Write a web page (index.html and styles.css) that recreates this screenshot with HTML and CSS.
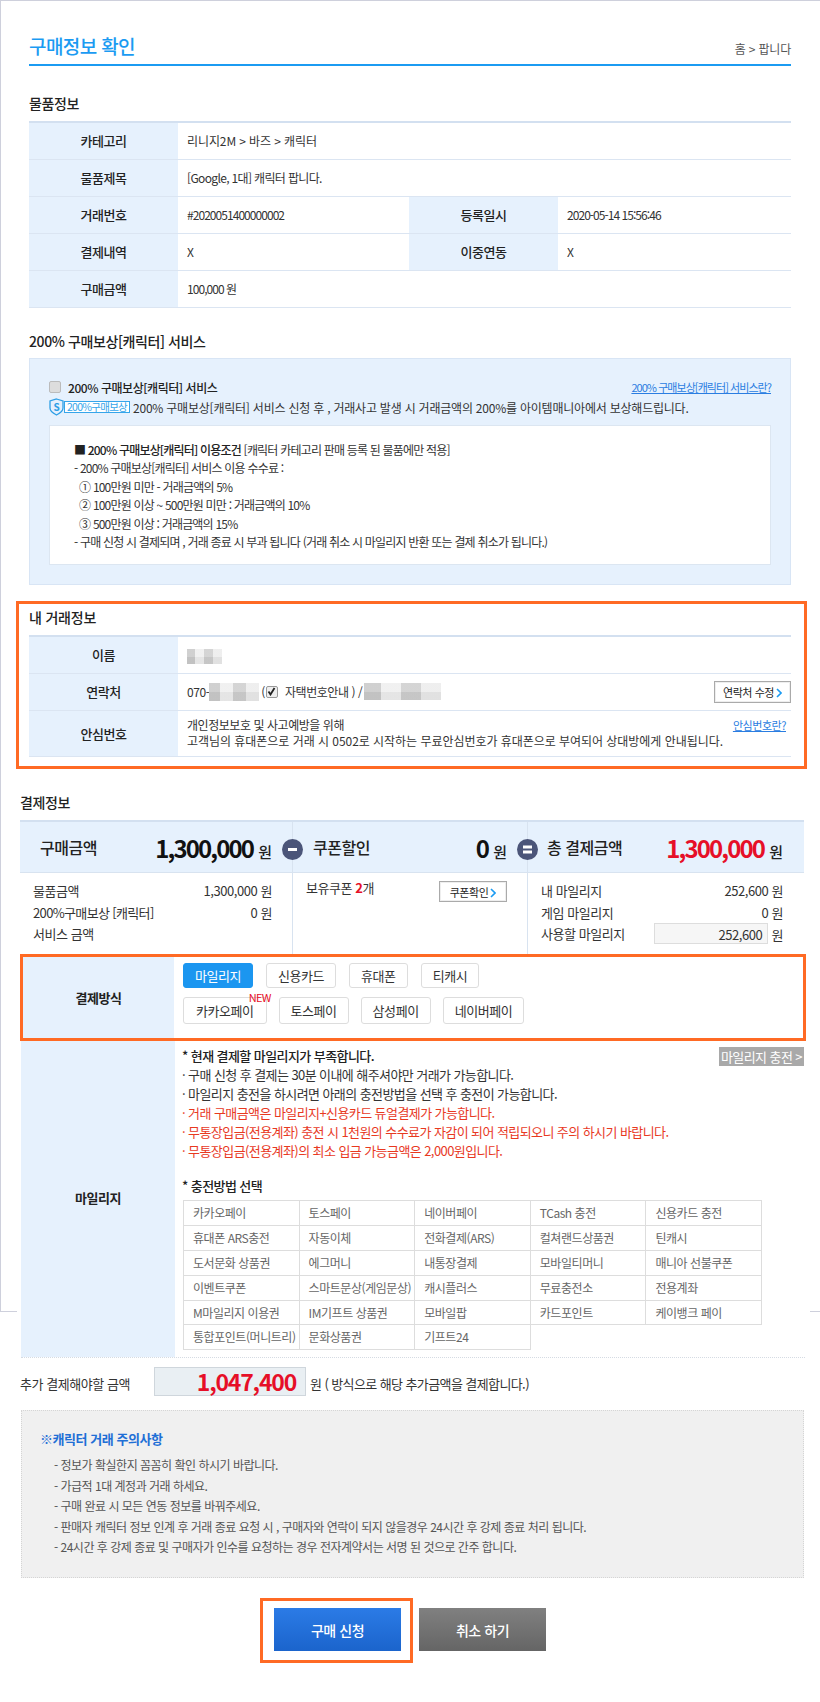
FILE: index.html
```html
<!DOCTYPE html>
<html lang="ko">
<head>
    <meta charset="UTF-8">
    <meta name="viewport" content="width=device-width, initial-scale=1.0">
    <title>구매정보 확인</title>
    <link rel="stylesheet" href="styles.css">
</head>
<body>
<div class="page">

<div class="page-head">
    <h2>구매정보 확인</h2>
    <span class="crumb">홈 &gt; 팝니다</span>
</div>

<div class="section">
    <h3 class="sec-title">물품정보</h3>
    <table class="info">
        <colgroup><col class="c-label"><col class="c-value"><col class="c-label"><col></colgroup>
        <tr><th>카테고리</th><td colspan="3" class="wide-text">리니지2M &gt; 바즈 &gt; 캐릭터</td></tr>
        <tr><th>물품제목</th><td colspan="3" class="tight">[Google, 1대] 캐릭터 팝니다.</td></tr>
        <tr><th>거래번호</th><td class="num">#2020051400000002</td><th>등록일시</th><td class="num">2020-05-14 15:56:46</td></tr>
        <tr><th>결제내역</th><td>X</td><th>이중연동</th><td>X</td></tr>
        <tr><th>구매금액</th><td colspan="3" class="num">100,000 원</td></tr>
    </table>
</div>

<div class="section">
    <h3 class="sec-title sec-2">200% 구매보상[캐릭터] 서비스</h3>
    <div class="reward-box">
        <div class="reward-top">
            <span class="check"></span>
            <b>200% 구매보상[캐릭터] 서비스</b>
            <a class="link push" href="#">200% 구매보상[캐릭터] 서비스란?</a>
        </div>
        <div class="reward-sub">
            <svg class="shield" width="15" height="18" viewBox="0 0 15 18">
                <path d="M7.5 1 L14 3 V10 C14 13.5 10.5 15.5 7.5 17 C4.500 15.500 1 13.500 1 10 V3 Z" fill="#e6f0fd" stroke="#2e9fe6" stroke-width="1.300"/>
                <text x="7.500" y="12.500" text-anchor="middle" class="shield-s">S</text>
            </svg>
            <span class="badge">200%구매보상</span>
            <span class="reward-desc">200% 구매보상[캐릭터] 서비스 신청 후 , 거래사고 발생 시 거래금액의 200%를 아이템매니아에서 보상해드립니다.</span>
        </div>
        <div class="reward-terms">
            <p><b>■ 200% 구매보상[캐릭터] 이용조건</b> [캐릭터 카테고리 판매 등록 된 물품에만 적용]</p>
            <p>- 200% 구매보상[캐릭터] 서비스 이용 수수료 :</p>
            <p>&nbsp;&nbsp;① 100만원 미만 - 거래금액의 5%</p>
            <p>&nbsp;&nbsp;② 100만원 이상 ~ 500만원 미만 : 거래금액의 10%</p>
            <p>&nbsp;&nbsp;③ 500만원 이상 : 거래금액의 15%</p>
            <p>- 구매 신청 시 결제되며 , 거래 종료 시 부과 됩니다 (거래 취소 시 마일리지 반환 또는 결제 취소가 됩니다.)</p>
        </div>
    </div>
</div>

<div class="my-info">
    <h3 class="sec-title">내 거래정보</h3>
    <table class="info">
        <colgroup><col class="c-label"><col></colgroup>
        <tr><th>이름</th><td><span class="blur blur-name"></span></td></tr>
        <tr>
            <th>연락처</th>
            <td>
                <div class="contact">
                    <span>070-</span><span class="blur blur-phone"></span>
                    <span class="paren">(</span><span class="check checked"><svg width="9" height="9" viewBox="0 0 9 9"><path d="M1.500 4.500 L3.500 7.500 L7.500 1" fill="none" stroke="#222" stroke-width="1.800"/></svg></span>
                    <span class="home-no">자택번호안내 ) /</span><span class="blur blur-mobile"></span>
                    <button class="small-btn push">연락처 수정<svg class="chev" width="6" height="10" viewBox="0 0 6 10"><path d="M1 1 L5 5 L1 9" fill="none" stroke="#1b9bf2" stroke-width="1.600"/></svg></button>
                </div>
            </td>
        </tr>
        <tr class="tall">
            <th>안심번호</th>
            <td>
                <div class="safe">
                    <p>개인정보보호 및 사고예방을 위해<br><span class="safe-long">고객님의 휴대폰으로 거래 시 0502로 시작하는 무료안심번호가 휴대폰으로 부여되어 상대방에게 안내됩니다.</span></p>
                    <a class="link" href="#">안심번호란?</a>
                </div>
            </td>
        </tr>
    </table>
</div>

<div class="pay">
    <h3 class="sec-title">결제정보</h3>
    <div class="summary">
        <div class="sum-col">
            <div class="sum-top"><span class="sum-name">구매금액</span><span class="sum-val"><b>1,300,000</b> 원</span></div>
            <div class="sum-rows">
                <div><span>물품금액</span><span>1,300,000 원</span></div>
                <div><span class="tight">200%구매보상 [캐릭터]</span><span>0 원</span></div>
                <div><span>서비스 금액</span></div>
            </div>
            <svg class="op" width="21" height="21" viewBox="0 0 21 21"><circle cx="10.500" cy="10.500" r="10.500" fill="#4b5579"/><rect x="6" y="9" width="9" height="3" fill="#fff"/></svg>
        </div>
        <div class="sum-col">
            <div class="sum-top"><span class="sum-name">쿠폰할인</span><span class="sum-val"><b>0</b> 원</span></div>
            <div class="coupon">
                <span>보유쿠폰 <b>2</b>개</span>
                <button class="small-btn">쿠폰확인<svg class="chev" width="6" height="10" viewBox="0 0 6 10"><path d="M1 1 L5 5 L1 9" fill="none" stroke="#1b9bf2" stroke-width="1.600"/></svg></button>
            </div>
            <svg class="op" width="21" height="21" viewBox="0 0 21 21"><circle cx="10.500" cy="10.500" r="10.500" fill="#4b5579"/><rect x="6" y="6.500" width="9" height="3" fill="#fff"/><rect x="6" y="11.500" width="9" height="3" fill="#fff"/></svg>
        </div>
        <div class="sum-col">
            <div class="sum-top"><span class="sum-name">총 결제금액</span><span class="sum-val total"><b>1,300,000</b> 원</span></div>
            <div class="sum-rows">
                <div><span>내 마일리지</span><span>252,600 원</span></div>
                <div><span>게임 마일리지</span><span>0 원</span></div>
                <div><span>사용할 마일리지</span><span><span class="use-input">252,600</span> 원</span></div>
            </div>
        </div>
    </div>

    <div class="method">
        <div class="side-label">결제방식</div>
        <div class="method-btns">
            <div class="btn-row">
                <button class="m-btn on">마일리지</button>
                <button class="m-btn">신용카드</button>
                <button class="m-btn">휴대폰</button>
                <button class="m-btn">티캐시</button>
            </div>
            <div class="btn-row second">
                <button class="m-btn kakao">카카오페이<span class="new">NEW</span></button>
                <button class="m-btn">토스페이</button>
                <button class="m-btn">삼성페이</button>
                <button class="m-btn">네이버페이</button>
            </div>
        </div>
    </div>

    <div class="mileage">
        <div class="side-label">마일리지</div>
        <div class="mileage-body">
            <a class="charge" href="#">마일리지 충전 &gt;</a>
            <p class="strong">* 현재 결제할 마일리지가 부족합니다.</p>
            <p>· 구매 신청 후 결제는 30분 이내에 해주셔야만 거래가 가능합니다.</p>
            <p>· 마일리지 충전을 하시려면 아래의 충전방법을 선택 후 충전이 가능합니다.</p>
            <p class="warn">· 거래 구매금액은 마일리지+신용카드 듀얼결제가 가능합니다.</p>
            <p class="warn">· 무통장입금(전용계좌) 충전 시 1천원의 수수료가 자감이 되어 적립되오니 주의 하시기 바랍니다.</p>
            <p class="warn">· 무통장입금(전용계좌)의 최소 입금 가능금액은 2,000원입니다.</p>
            <p class="strong pick">* 충전방법 선택</p>
            <div class="charge-grid">
                <span>카카오페이</span><span>토스페이</span><span>네이버페이</span><span>TCash 충전</span><span>신용카드 충전</span>
                <span>휴대폰 ARS충전</span><span>자동이체</span><span>전화결제(ARS)</span><span>컬쳐랜드상품권</span><span>틴캐시</span>
                <span>도서문화 상품권</span><span>에그머니</span><span>내통장결제</span><span>모바일티머니</span><span>매니아 선불쿠폰</span>
                <span>이벤트쿠폰</span><span>스마트문상(게임문상)</span><span>캐시플러스</span><span>무료충전소</span><span>전용계좌</span>
                <span>M마일리지 이용권</span><span>IM기프트 상품권</span><span>모바일팝</span><span>카드포인트</span><span>케이뱅크 페이</span>
                <span>통합포인트(머니트리)</span><span>문화상품권</span><span>기프트24</span>
            </div>
        </div>
    </div>

    <div class="extra">
        <span class="extra-name">추가 결제해야할 금액</span>
        <span class="extra-val">1,047,400</span>
        <span class="extra-note">원 ( 방식으로 해당 추가금액을 결제합니다.)</span>
    </div>

    <div class="notice">
        <h4>※캐릭터 거래 주의사항</h4>
        <ul>
            <li>- 정보가 확실한지 꼼꼼히 확인 하시기 바랍니다.</li>
            <li>- 가급적 1대 계정과 거래 하세요.</li>
            <li>- 구매 완료 시 모든 연동 정보를 바꿔주세요.</li>
            <li>- 판매자 캐릭터 정보 인계 후 거래 종료 요청 시 , 구매자와 연락이 되지 않을경우 24시간 후 강제 종료 처리 됩니다.</li>
            <li>- 24시간 후 강제 종료 및 구매자가 인수를 요청하는 경우 전자계약서는 서명 된 것으로 간주 합니다.</li>
        </ul>
    </div>

    <div class="actions">
        <div class="action-frame"><button class="big-btn blue">구매 신청</button></div>
        <button class="big-btn gray">취소 하기</button>
    </div>
</div>

</div>
</body>
</html>
```

FILE: styles.css
```css
* {
    box-sizing: border-box;
}

body {
    font-family: "Noto Sans CJK KR", "Noto Sans", sans-serif;
    font-size: 12px;
    letter-spacing: -0.45px;
    color: #333;
    background-color: #fff;
    margin: 0;
}

h2, h3, h4, p, ul {
    margin: 0;
    padding: 0;
    list-style: none;
}

button {
    font-family: inherit;
    letter-spacing: inherit;
    cursor: pointer;
}

.page {
    position: relative;
    height: 1702px;
    overflow: hidden;
}

/* thin frame of the page behind the content */
.page::before {
    content: "";
    position: absolute;
    left: 0;
    top: 0;
    width: 820px;
    height: 1310px;
    border: 1px solid #ced0dc;
}

.page-head {
    position: relative;
    margin: 0 29px;
    height: 66px;
    padding-bottom: 5px;
    display: flex;
    justify-content: space-between;
    align-items: flex-end;
    border-bottom: 2px solid #1b9bf2;
}

.page-head h2 {
    font-size: 19px;
    font-weight: 500;
    line-height: 26px;
    letter-spacing: -0.6px;
    color: #1b9bf2;
}

.crumb {
    color: #555;
    line-height: 18px;
    padding-bottom: 1px;
    letter-spacing: -0.2px;
}

.section {
    position: relative;
    margin: 0 29px;
}

.sec-title {
    font-size: 14px;
    font-weight: 500;
    line-height: 20px;
    color: #222;
    letter-spacing: -0.4px;
    margin-top: 27px;
    margin-bottom: 8px;
}

.section .sec-2 {
    margin-top: 23px;
    margin-bottom: 7px;
}

.info {
    width: 100%;
    table-layout: fixed;
    border-collapse: separate;
    border-spacing: 0;
    border-top: 2px solid #d3e0f0;
}

.c-label {
    width: 149px;
}

.c-value {
    width: 231px;
}

.info th, .info td {
    height: 37px;
    border-bottom: 1px solid #dbe5f2;
    padding: 0 0 1px 9px;
    text-align: left;
    font-weight: 400;
}

.info th {
    background-color: #e6f1fd;
    padding: 0 0 1px;
    text-align: center;
    font-size: 13px;
    font-weight: 500;
    color: #222;
}

.info .num {
    letter-spacing: -0.95px;
}

.info .wide-text {
    letter-spacing: -0.1px;
}

.tight, .info .tight {
    letter-spacing: -0.65px;
}

.reward-box {
    height: 227px;
    background-color: #e6f1fd;
    border: 1px solid #d8e5f5;
    padding: 18px 19px 0;
}

.reward-top {
    display: flex;
    align-items: center;
    height: 20px;
}

.reward-top b {
    font-weight: 500;
    font-size: 12px;
    color: #222;
    margin-left: 7px;
}

.check {
    display: inline-flex;
    align-items: center;
    justify-content: center;
    width: 12px;
    height: 12px;
    background-color: #ddd;
    border: 1px solid #bbb;
    border-radius: 2px;
}

.checked {
    background-color: #eee;
    border-color: #999;
}

.push {
    margin-left: auto;
}

.link {
    color: #2a7de1;
    font-size: 11px;
    text-decoration: underline;
}

.reward-top .link {
    letter-spacing: -0.95px;
}

.reward-sub {
    display: flex;
    align-items: center;
    height: 20px;
    white-space: nowrap;
}

.reward-desc {
    letter-spacing: -0.22px;
}

.shield-s {
    font-size: 10px;
    font-weight: 700;
    fill: #2e9fe6;
}

.badge {
    height: 12px;
    line-height: 10px;
    width: 66px;
    border: 1px solid #35a5ea;
    background-color: #fff;
    color: #35a5ea;
    font-size: 10.500px;
    text-align: center;
    margin-right: 3px;
    letter-spacing: -0.7px;
}

.reward-terms {
    height: 140px;
    margin-top: 8px;
    background-color: #fff;
    border: 1px solid #dce6f1;
    padding: 15px 24px 0;
    line-height: 18.400px;
    font-size: 12px;
    letter-spacing: -0.8px;
}

.reward-terms b {
    font-weight: 500;
    color: #222;
}

.my-info {
    position: relative;
    width: 791px;
    height: 168px;
    margin: 16px 0 0 16px;
    padding: 4px 13px 0 10px;
    border: 3px solid #ff6a24;
}

.my-info .sec-title {
    margin-top: -1px;
    letter-spacing: -0.2px;
}

.tall th, .tall td {
    height: 46px;
}

.blur {
    display: inline-block;
    background-color: #e2e2e2;
    background-image:
        linear-gradient(90deg, rgba(120,120,120,.22) 0 22%, rgba(255,255,255,.35) 22% 48%, rgba(120,120,120,.18) 48% 74%, rgba(255,255,255,.25) 74% 100%),
        linear-gradient(rgba(255,255,255,.25) 0 50%, rgba(120,120,120,.1) 50% 100%);
}

.blur-name {
    width: 35px;
    height: 15px;
    vertical-align: middle;
}

.blur-phone {
    width: 50px;
    height: 18px;
}

.blur-mobile {
    width: 77px;
    height: 17px;
    margin-left: 2px;
}

.contact {
    display: flex;
    align-items: center;
}

.paren {
    margin: 0 1px 0 2px;
}

.home-no {
    margin-left: 7px;
}

.small-btn {
    height: 22px;
    width: 77px;
    padding: 0;
    background-color: #fff;
    border: 1px solid #aaa;
    box-shadow: 0 0 0 1px #eee inset;
    font-size: 11px;
    color: #222;
}

.chev {
    margin-left: 2px;
    vertical-align: -1px;
}

.safe {
    display: flex;
    justify-content: space-between;
    line-height: 16px;
    padding-right: 5px;
}

.safe-long {
    letter-spacing: -0.04px;
}

.pay {
    position: relative;
    width: 793px;
    margin-left: 17px;
    padding: 1px 0 0 3px;
    background-color: #fff;
}

.pay .sec-title {
    margin-top: 22px;
    margin-bottom: 8px;
}

.summary {
    width: 784px;
    height: 135px;
    display: grid;
    grid-template-columns: 273px 235px 276px;
    border-top: 2px solid #d3e0f0;
}

.sum-col {
    position: relative;
    border-right: 1px solid #d8e3f0;
    padding: 0 20px 0 13px;
}

.sum-col:last-child {
    border-right: none;
    padding: 0 21px 0 13px;
}

.sum-top {
    margin: 0 -20px 0 -13px;
    padding: 0 20px 0 20px;
    height: 51px;
    background-color: #e6f1fd;
    border-bottom: 1px solid #d8e3f0;
    display: flex;
    justify-content: space-between;
    align-items: center;
}

.sum-col:last-child .sum-top {
    margin: 0 -21px 0 -13px;
    padding: 0 21px 0 19px;
}

.sum-name {
    font-size: 16px;
    font-weight: 500;
    color: #222;
}

.sum-val {
    font-size: 15px;
    font-weight: 500;
    color: #222;
    letter-spacing: 0;
}

.sum-val b {
    font-size: 24px;
    font-weight: 700;
    letter-spacing: -1.900px;
    color: #111;
    margin-right: 1px;
}

.total b {
    color: #e60f28;
}

.sum-rows {
    margin-top: 7px;
    line-height: 21.500px;
    font-size: 13px;
}

.sum-rows > div {
    display: flex;
    justify-content: space-between;
}

.use-input {
    display: inline-block;
    width: 114px;
    height: 21px;
    line-height: 21px;
    text-align: right;
    padding-right: 5px;
    border: 1px solid #ddd;
    background-color: #f6f6f6;
}

.op {
    position: absolute;
    right: -11px;
    top: 17px;
    z-index: 1;
}

.coupon {
    display: flex;
    justify-content: space-between;
    align-items: flex-start;
    margin-top: 6px;
    font-size: 13px;
    line-height: 18px;
}

.coupon b {
    color: #e60f28;
}

.coupon .small-btn {
    width: 68px;
    height: 21px;
    line-height: 18px;
    margin-top: 2px;
}

.method {
    position: relative;
    width: 786px;
    height: 87px;
    margin-top: -1px;
    border: 3px solid #ff6a24;
    display: grid;
    grid-template-columns: 151px 1fr;
    background-color: #fff;
}

.side-label {
    background-color: #e6f1fd;
    display: flex;
    align-items: center;
    justify-content: center;
    font-size: 13px;
    font-weight: 700;
    color: #222;
}

.method-btns {
    padding: 6px 0 0 9px;
}

.btn-row {
    display: flex;
    gap: 13px;
}

.second {
    gap: 12px;
    margin-top: 9px;
}

.m-btn {
    position: relative;
    height: 25px;
    min-width: 58px;
    padding: 0 11px;
    font-size: 13px;
    color: #333;
    background-color: #fff;
    border: 1px solid #ddd;
    border-radius: 3px;
}

.second .m-btn {
    height: 27px;
}

.second .kakao {
    padding: 0 12px;
}

.m-btn.on {
    background-color: #1b96f0;
    border-color: #1b96f0;
    color: #fff;
}

.new {
    position: absolute;
    right: -5px;
    top: -7px;
    color: #e60f28;
    font-size: 11px;
    line-height: 12px;
    letter-spacing: -0.8px;
}

.mileage {
    display: grid;
    grid-template-columns: 154px 1fr;
    width: 784px;
    height: 317px;
    margin-left: 1px;
    border-bottom: 1px dotted #d5dbe3;
}

.mileage .side-label {
    padding-bottom: 3px;
}

.mileage-body {
    padding: 6px 0 0 7px;
    line-height: 18.900px;
    font-size: 13px;
    letter-spacing: -0.58px;
}

.charge {
    float: right;
    width: 85px;
    height: 19px;
    margin-right: 1px;
    line-height: 19px;
    text-align: center;
    background-color: #a9a9a9;
    color: #fff;
    font-size: 13px;
    text-decoration: none;
}

.strong {
    font-weight: 500;
    color: #222;
}

.warn {
    color: #e8391f;
}

.pick {
    margin-top: 17px;
}

.charge-grid {
    display: grid;
    grid-template-columns: repeat(5, 115.600px);
    grid-auto-rows: 24.800px;
    margin: 4px 0 0 1px;
    font-size: 12px;
    letter-spacing: -0.45px;
    color: #666;
}

.charge-grid span {
    margin: 0 -1px -1px 0;
    padding-left: 9px;
    line-height: 24px;
    border: 1px solid #ddd;
    white-space: nowrap;
}

.extra {
    display: flex;
    align-items: center;
    height: 29px;
    margin-top: 9px;
    font-size: 13px;
}

.extra-name {
    width: 134px;
    padding-top: 3px;
}

.extra-val {
    width: 152px;
    height: 29px;
    padding-right: 9px;
    line-height: 27px;
    text-align: right;
    background-color: #e9eff3;
    border: 1px solid #cfd6dc;
    color: #e60f28;
    font-size: 23px;
    font-weight: 700;
    letter-spacing: -1.200px;
    margin-right: 4px;
}

.extra-note {
    padding-top: 3px;
    letter-spacing: -0.6px;
}

.notice {
    width: 783px;
    height: 168px;
    margin: 14px 0 0 1px;
    background-color: #f0f0f0;
    border: 1px dotted #d5d5d5;
    padding: 18px 18px 0;
}

.notice h4 {
    font-size: 13px;
    font-weight: 700;
    line-height: 20px;
    color: #1f6fd6;
}

.notice ul {
    margin-top: 6px;
    padding-left: 14px;
    line-height: 20.500px;
    color: #555;
    letter-spacing: -0.5px;
}

.actions {
    display: flex;
    align-items: flex-start;
    margin: 20px 0 0 240px;
}

.action-frame {
    width: 153px;
    height: 65px;
    padding: 7px 9px 0 11px;
    border: 3px solid #ff6a24;
}

.big-btn {
    width: 127px;
    height: 43px;
    padding: 0;
    border: none;
    color: #fff;
    font-size: 14px;
    font-weight: 500;
}

.blue {
    background-image: linear-gradient(#2b7be6, #1b64cc);
}

.gray {
    background-image: linear-gradient(#808080, #656565);
    margin: 10px 0 0 6px;
}
```
